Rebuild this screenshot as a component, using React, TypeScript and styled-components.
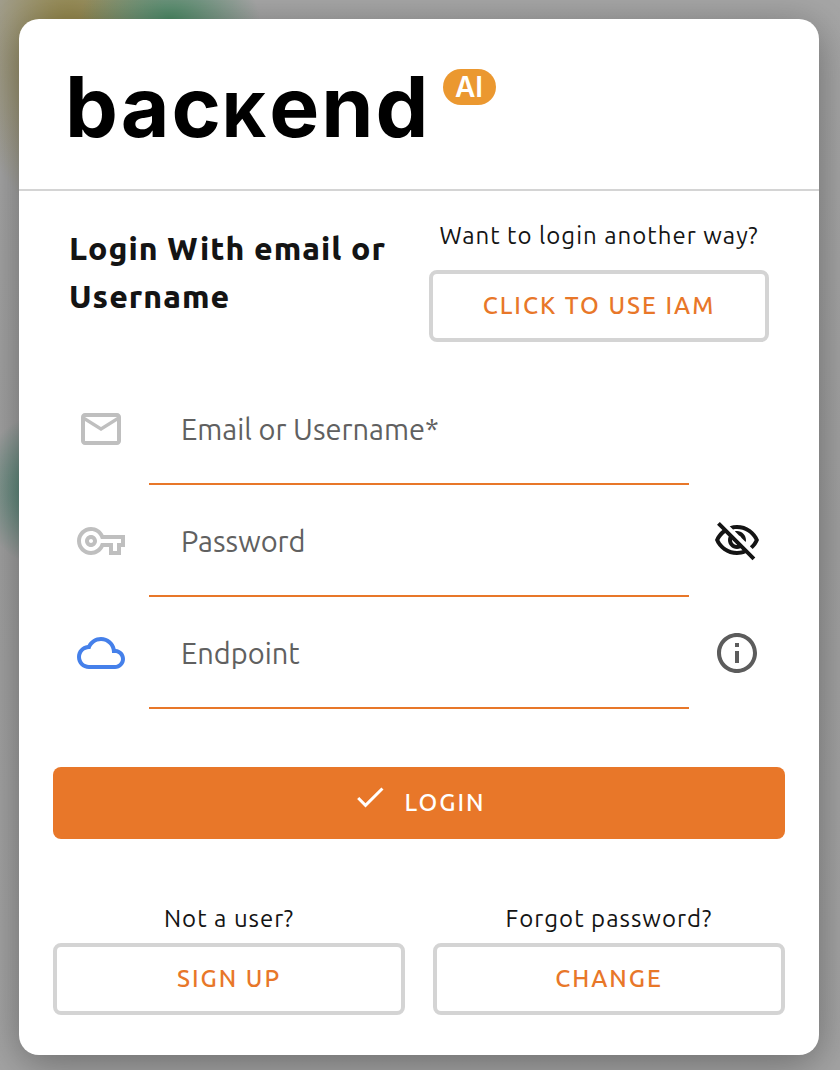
import React from "react";
import styled, { createGlobalStyle } from "styled-components";

const orange = "#e87729";
const line = "#d4d4d4";

const GlobalStyle = createGlobalStyle`
  *, *::before, *::after { box-sizing: border-box; }
  body {
    margin: 0;
    color: #141414;
    font-family: Ubuntu, "Noto Sans", sans-serif;
    font-size: 24px;
    font-weight: 400;
    line-height: 32px;
    letter-spacing: 1px;
  }
`;

const Backdrop = styled.main`
  min-height: 100vh;
  padding: 19px 21px 15px 19px;
  background:
    radial-gradient(ellipse 90px 60px at 170px 20px, #4c8b66, transparent 100%),
    radial-gradient(ellipse 100px 170px at 70px 50px, #968a50 0 20%, transparent 100%),
    radial-gradient(ellipse 60px 75px at 40px 490px, #3f7d69, transparent 100%),
    linear-gradient(#a6a6a6, #a0a0a0 50%, #a4a4a4);
`;

const Card = styled.section`
  background: #fff;
  border-radius: 20px;
  box-shadow: 0 8px 40px rgba(0, 0, 0, 0.35);
`;

const Header = styled.header`
  display: flex;
  align-items: flex-start;
  gap: 12px;
  padding: 50px 46px;
  height: 172px;
  border-bottom: 2px solid ${line};
`;

const Wordmark = styled.span`
  color: #000;
  font-family: Inter, sans-serif;
  font-size: 84px;
  font-weight: 700;
  line-height: 76px;
  letter-spacing: 2px;
`;

const SmallCap = styled.span`
  font-size: 60px;
  text-transform: uppercase;
  font-weight: 800;
`;

const Badge = styled.span`
  display: grid;
  place-items: center;
  width: 53px;
  height: 36px;
  border-radius: 18px;
  background: #eb9830;
  color: #fff;
  font-family: Inter, sans-serif;
  font-size: 28px;
  font-weight: 600;
  letter-spacing: 0;
`;

const Form = styled.form`
  padding: 29px 34px 40px;
`;

const Intro = styled.div`
  display: flex;
  justify-content: space-between;
  gap: 16px;
  padding: 0 16px;
`;

const Title = styled.h1`
  flex: 1;
  margin: 4px 0 0;
  font-size: 32px;
  font-weight: 800;
  line-height: 48px;
`;

const Choice = styled.div<{ $gap: number }>`
  display: flex;
  flex-direction: column;
  flex: 0 1 auto;
  gap: ${(p) => p.$gap}px;
  text-align: center;
`;

const IamChoice = styled(Choice)`
  flex-basis: 340px;
`;

const Button = styled.button<{ $filled?: boolean }>`
  display: flex;
  align-items: center;
  justify-content: center;
  gap: 16px;
  width: 100%;
  height: 72px;
  padding: 0;
  border: ${(p) => (p.$filled ? "0" : `4px solid ${line}`)};
  border-radius: 8px;
  background: ${(p) => (p.$filled ? orange : "#fff")};
  color: ${(p) => (p.$filled ? "#fff" : orange)};
  font: inherit;
  font-weight: 500;
  letter-spacing: 2px;
  text-transform: uppercase;
  cursor: pointer;
`;

const Fields = styled.div`
  margin: 31px 0 58px;
`;

const Field = styled.div`
  display: grid;
  grid-template-columns: 96px 1fr 96px;
  height: 112px;
`;

const IconCell = styled.label<{ $color: string }>`
  display: grid;
  place-items: center;
  color: ${(p) => p.$color};
`;

const IconButton = styled.button<{ $color: string }>`
  display: grid;
  place-items: center;
  padding: 0;
  border: 0;
  background: none;
  color: ${(p) => p.$color};
  cursor: pointer;
`;

const Input = styled.input`
  min-width: 0;
  padding: 2px 32px 0;
  border: 0;
  border-bottom: 2px solid ${orange};
  outline: 0;
  background: none;
  color: #141414;
  font: inherit;
  font-size: 29px;
  letter-spacing: 0;
  &::placeholder { color: #606060; opacity: 1; }
`;

const Footer = styled.div`
  display: grid;
  grid-template-columns: 1fr 1fr;
  gap: 28px;
  margin-top: 64px;
`;

const paths = {
  mail: "M22 6c0-1.1-.9-2-2-2H4c-1.1 0-2 .9-2 2v12c0 1.1.9 2 2 2h16c1.1 0 2-.9 2-2V6zm-2 0l-8 5-8-5h16zm0 12H4V8l8 5 8-5v10z",
  key: "M22 19h-6v-4h-2.68c-1.14 2.42-3.6 4-6.32 4-3.86 0-7-3.14-7-7s3.14-7 7-7c2.72 0 5.17 1.58 6.32 4H24v6h-2v4zm-4-2h2v-4h2v-2H11.94l-.23-.67C11.01 8.34 9.11 7 7 7c-2.76 0-5 2.24-5 5s2.24 5 5 5c2.11 0 4.01-1.34 4.71-3.33l.23-.67H18v4zM7 15c-1.65 0-3-1.35-3-3s1.35-3 3-3 3 1.35 3 3-1.35 3-3 3zm0-4c-.55 0-1 .45-1 1s.45 1 1 1 1-.45 1-1-.45-1-1-1z",
  cloud: "M19.35 10.04C18.67 6.59 15.64 4 12 4 9.11 4 6.6 5.64 5.35 8.04 2.34 8.36 0 10.91 0 14c0 3.31 2.69 6 6 6h13c2.76 0 5-2.24 5-5 0-2.64-2.05-4.78-4.65-4.96zM19 18H6c-2.21 0-4-1.79-4-4s1.79-4 4-4h.71C7.37 7.69 9.48 6 12 6c3.04 0 5.5 2.46 5.5 5.5v.5H19c1.66 0 3 1.34 3 3s-1.34 3-3 3z",
  eyeOff: "M12 6c3.79 0 7.17 2.13 8.82 5.5-.59 1.22-1.42 2.27-2.41 3.12l1.41 1.41c1.39-1.23 2.49-2.77 3.18-4.53C21.27 7.11 17 4 12 4c-1.27 0-2.49.2-3.64.57l1.65 1.65C10.66 6.09 11.32 6 12 6zm-1.07 1.14L13 9.21c.57.25 1.03.71 1.28 1.28l2.07 2.07c.08-.34.14-.7.14-1.07C16.5 9.01 14.48 7 12 7c-.37 0-.72.05-1.07.14zM2.01 3.87l2.68 2.68C3.06 7.83 1.77 9.53 1 11.5 2.73 15.89 7 19 12 19c1.52 0 2.98-.29 4.32-.82l3.42 3.42 1.41-1.41L3.42 2.45 2.01 3.87zm7.5 7.5l2.61 2.61c-.04.01-.08.02-.12.02-1.38 0-2.5-1.12-2.5-2.5 0-.05.01-.08.01-.13zm-3.4-3.4l1.75 1.75c-.23.55-.36 1.15-.36 1.78 0 2.48 2.02 4.5 4.5 4.5.63 0 1.23-.13 1.77-.36l.98.98c-.88.24-1.8.38-2.75.38-3.79 0-7.17-2.13-8.82-5.5.7-1.43 1.72-2.61 2.93-3.53z",
  info: "M11 7h2v2h-2zm0 4h2v6h-2zm1-9C6.48 2 2 6.48 2 12s4.48 10 10 10 10-4.48 10-10S17.52 2 12 2zm0 18c-4.41 0-8-3.59-8-8s3.59-8 8-8 8 3.59 8 8-3.59 8-8 8z",
  check: "M9 16.17L4.83 12l-1.42 1.41L9 19 21 7l-1.41-1.41z",
};

function Icon({ name, size = 48 }: { name: keyof typeof paths; size?: number }) {
  return (
    <svg width={size} height={size} viewBox="0 0 24 24" fill="currentColor" aria-hidden="true">
      <path d={paths[name]} />
    </svg>
  );
}

const CheckSlot = styled.span`
  display: flex;
  padding-bottom: 12px;
`;

export default function App() {
  return (
    <>
      <GlobalStyle />
      <Backdrop>
        <Card>
          <Header>
            <Wordmark>bac<SmallCap>k</SmallCap>end</Wordmark>
            <Badge>AI</Badge>
          </Header>
          <Form onSubmit={(e) => e.preventDefault()}>
            <Intro>
              <Title>Login With email or Username</Title>
              <IamChoice $gap={18}>
                <span>Want to login another way?</span>
                <Button type="button">Click to use IAM</Button>
              </IamChoice>
            </Intro>
            <Fields>
              <Field>
                <IconCell htmlFor="user" $color="#bfbfbf"><Icon name="mail" /></IconCell>
                <Input id="user" aria-label="Email or Username" placeholder="Email or Username*" />
              </Field>
              <Field>
                <IconCell htmlFor="password" $color="#bfbfbf"><Icon name="key" /></IconCell>
                <Input id="password" type="password" aria-label="Password" placeholder="Password" />
                <IconButton type="button" aria-label="Show password" $color="#141414">
                  <Icon name="eyeOff" />
                </IconButton>
              </Field>
              <Field>
                <IconCell htmlFor="endpoint" $color="#4580ea"><Icon name="cloud" /></IconCell>
                <Input id="endpoint" aria-label="Endpoint" placeholder="Endpoint" />
                <IconButton type="button" aria-label="Endpoint information" $color="#5c5c5c">
                  <Icon name="info" />
                </IconButton>
              </Field>
            </Fields>
            <Button type="submit" $filled>
              <CheckSlot><Icon name="check" size={36} /></CheckSlot>
              Login
            </Button>
            <Footer>
              <Choice $gap={8}>
                <span>Not a user?</span>
                <Button type="button">Sign up</Button>
              </Choice>
              <Choice $gap={8}>
                <span>Forgot password?</span>
                <Button type="button">Change</Button>
              </Choice>
            </Footer>
          </Form>
        </Card>
      </Backdrop>
    </>
  );
}
